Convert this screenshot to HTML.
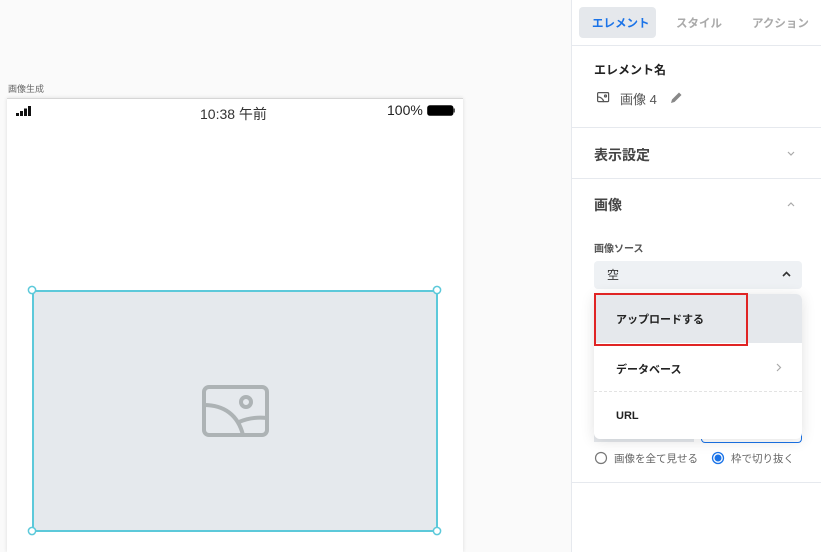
<!DOCTYPE html>
<html><head><meta charset="utf-8"><style>
*{box-sizing:border-box;margin:0;padding:0}
html,body{width:821px;height:552px;overflow:hidden}
body{background:#fafafa;font-family:"Liberation Sans","Noto Sans CJK JP",sans-serif;position:relative;color:#333}
.abs{position:absolute}
.phone{left:7px;top:98px;width:456px;height:454px;background:#fff;border-top:1px solid #d6d6d6;box-shadow:0 0 4px rgba(0,0,0,.12)}
.panel{left:571px;top:0;width:250px;height:552px;background:#fff;border-left:1px solid #e6e9ee}
.hr{left:0;width:250px;height:1px;background:#e6e9ee}
.t{font-size:13px;white-space:nowrap}
</style></head><body>
<div class="abs t" style="left:8px;top:82px;font-size:9px;color:#666">画像生成</div>
<div class="abs phone">
  <svg class="abs" style="left:9px;top:7px" width="18" height="11"><rect x="0" y="7" width="3" height="3" fill="#111"/><rect x="4" y="5" width="3" height="5" fill="#111"/><rect x="8" y="2.5" width="3" height="7.5" fill="#111"/><rect x="12" y="0" width="3" height="10" fill="#111"/></svg>
  <div class="abs t" style="left:193px;top:5px;font-size:14px;color:#333">10:38 午前</div>
  <div class="abs t" style="left:380px;top:3px;font-size:14px;color:#222">100%</div>
  <svg class="abs" style="left:420px;top:6px" width="30" height="12"><rect x="0.8" y="0.8" width="25" height="9.4" rx="2" fill="#000" stroke="#000" stroke-width="1.2"/><rect x="26.5" y="3.5" width="1.5" height="4" fill="#555"/></svg>
</div>
<div class="abs" style="left:32px;top:290px;width:406px;height:242px;background:#e5e9ed;border:2px solid #5cc9da"></div>
<svg class="abs" style="left:26px;top:284px" width="420" height="256"><g fill="#fff" stroke="#5cc9da" stroke-width="1.5"><circle cx="6" cy="6" r="3.6"/><circle cx="411" cy="6" r="3.6"/><circle cx="6" cy="247" r="3.6"/><circle cx="411" cy="247" r="3.6"/></g></svg>
<svg class="abs" style="left:200px;top:383px" width="72" height="56" fill="none" stroke="#adb3b5" stroke-width="4"><rect x="4" y="4" width="63" height="48" rx="5"/><circle cx="46" cy="19" r="5"/><path d="M4 22 C24 22 38 32 43 52"/><path d="M39 39 C48 35 58 34 67 35"/></svg>

<div class="abs panel">
  <div class="abs" style="left:7px;top:7px;width:77px;height:31px;background:#e5e8ec;border-radius:4px"></div>
  <div class="abs t" style="left:20px;top:15px;font-size:11.5px;color:#1a73e8;font-weight:bold">エレメント</div>
  <div class="abs t" style="left:104px;top:15px;font-size:11.5px;color:#aaa;font-weight:bold">スタイル</div>
  <div class="abs t" style="left:180px;top:15px;font-size:11.5px;color:#aaa;font-weight:bold">アクション</div>
  <div class="abs hr" style="top:45px"></div>
  <div class="abs t" style="left:22px;top:61px;font-size:12px;font-weight:bold;color:#222">エレメント名</div>
  <svg class="abs" style="left:25px;top:92px" width="13" height="11" fill="none" stroke="#555" stroke-width="1.2"><rect x="0.6" y="0.6" width="11" height="9" rx="1"/><path d="M1 5 C4 5 6 7 7 10"/><circle cx="8.5" cy="4" r="1"/></svg>
  <div class="abs t" style="left:48px;top:89px;color:#555">画像 4</div>
  <svg class="abs" style="left:98px;top:91px" width="13" height="13"><path d="M1 12 L2 8.5 L9 1.5 L11.5 4 L4.5 11 Z" fill="#888"/></svg>
  <div class="abs hr" style="top:127px"></div>
  <div class="abs t" style="left:22px;top:145px;font-size:14px;color:#444;font-weight:bold">表示設定</div>
  <svg class="abs" style="left:215px;top:151px" width="8" height="5" fill="none" stroke="#aaa" stroke-width="1.2"><path d="M1 1 L4 4 L7 1"/></svg>
  <div class="abs hr" style="top:178px"></div>
  <div class="abs t" style="left:22px;top:195px;font-size:14px;color:#444;font-weight:bold">画像</div>
  <svg class="abs" style="left:215px;top:202px" width="8" height="5" fill="none" stroke="#aaa" stroke-width="1.2"><path d="M1 4 L4 1 L7 4"/></svg>
  <div class="abs t" style="left:22px;top:240px;font-size:10px;color:#555;font-weight:bold">画像ソース</div>
  <div class="abs" style="left:22px;top:261px;width:208px;height:28px;background:#eef1f4;border-radius:4px"></div>
  <div class="abs t" style="left:35px;top:266px;font-size:12px;color:#333">空</div>
  <svg class="abs" style="left:210px;top:271px" width="9" height="6" fill="none" stroke="#333" stroke-width="1.6"><path d="M1 5 L4.5 1.5 L8 5"/></svg>
  <div class="abs" style="left:22px;top:432px;width:100px;height:10px;background:#e5e8ec"></div>
  <div class="abs" style="left:129px;top:430px;width:101px;height:13px;border:1.5px solid #1a73e8;border-top:none;border-radius:0 0 4px 4px"></div>
  <div class="abs" style="left:22px;top:294px;width:208px;height:145px;background:#fff;border-radius:6px;box-shadow:0 2px 14px rgba(0,0,0,.12);overflow:hidden">
    <div class="abs" style="left:0;top:0;width:208px;height:49px;background:#e5e8ec"></div>
    <div class="abs" style="left:0;top:97px;width:208px;height:0;border-top:1px dashed #e3e3e3"></div>
  </div>
  <div class="abs" style="left:22px;top:293px;width:154px;height:53px;border:2.5px solid #e02424"></div>
  <div class="abs t" style="left:44px;top:311px;font-size:11px;font-weight:bold;color:#222">アップロードする</div>
  <div class="abs t" style="left:44px;top:361px;font-size:11px;font-weight:bold;color:#222">データベース</div>
  <svg class="abs" style="left:204px;top:363px" width="6" height="9" fill="none" stroke="#aaa" stroke-width="1.2"><path d="M1 1 L4.5 4.5 L1 8"/></svg>
  <div class="abs t" style="left:44px;top:410px;font-size:11px;font-weight:bold;color:#222">URL</div>
  <svg class="abs" style="left:22px;top:451px" width="14" height="14"><circle cx="7" cy="7" r="5.5" fill="#fff" stroke="#777" stroke-width="1.2"/></svg>
  <div class="abs t" style="left:42px;top:451px;font-size:10.5px;color:#666">画像を全て見せる</div>
  <svg class="abs" style="left:139px;top:451px" width="14" height="14"><circle cx="7" cy="7" r="5.5" fill="#fff" stroke="#1a73e8" stroke-width="1.3"/><circle cx="7" cy="7" r="3.5" fill="#1a73e8"/></svg>
  <div class="abs t" style="left:159px;top:451px;font-size:10.5px;color:#666">枠で切り抜く</div>
  <div class="abs hr" style="top:482px"></div>
</div>
</body></html>
